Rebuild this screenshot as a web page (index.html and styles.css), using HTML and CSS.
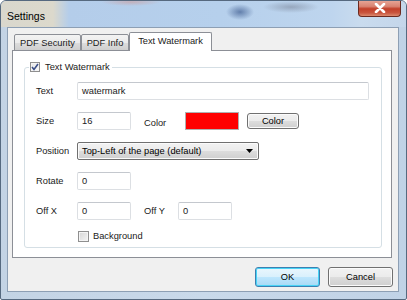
FILE: index.html
```html
<!DOCTYPE html>
<html>
<head>
<meta charset="utf-8">
<link rel="stylesheet" href="styles.css">
</head>
<body>
<div class="window">
  <div class="titlebar">
    <span class="title">Settings</span>
    <div class="close"><svg width="12" height="10" viewBox="0 0 12 10"><path d="M2 1 L10 9 M10 1 L2 9" stroke="#fff" stroke-width="2.6" stroke-linecap="round"/></svg></div>
  </div>
  <div class="client">
    <div class="tabs">
      <div class="tab t1">PDF Security</div>
      <div class="tab t2">PDF Info</div>
      <div class="tab active t3">Text Watermark</div>
    </div>
    <div class="panel">
      <div class="group">
        <div class="legend">
          <span class="check checked"><svg width="8" height="8" viewBox="0 0 8 8"><path d="M1 4 L3 6.5 L7 1" fill="none" stroke="#3b4f88" stroke-width="1.6"/></svg></span>
          <span>Text Watermark</span>
        </div>
        <div class="row">
          <span class="label">Text</span>
          <div class="field wide">watermark</div>
        </div>
        <div class="row">
          <span class="label">Size</span>
          <div class="field small">16</div>
          <span class="label lbl2 color-lbl">Color</span>
          <div class="swatch"></div>
          <div class="btn colorbtn">Color</div>
        </div>
        <div class="row">
          <span class="label">Position</span>
          <div class="select"><span>Top-Left of the page (default)</span><svg width="7" height="4" viewBox="0 0 7 4"><path d="M0 0 H7 L3.5 4 Z" fill="#000"/></svg></div>
        </div>
        <div class="row">
          <span class="label">Rotate</span>
          <div class="field small">0</div>
        </div>
        <div class="row">
          <span class="label">Off X</span>
          <div class="field small">0</div>
          <span class="label lbl2 offy">Off Y</span>
          <div class="field small">0</div>
        </div>
        <div class="row checkrow">
          <span class="check"></span>
          <span class="checklabel">Background</span>
        </div>
      </div>
    </div>
    <div class="buttons">
      <div class="btn ok">OK</div>
      <div class="btn cancel">Cancel</div>
    </div>
  </div>
</div>
</body>
</html>
```
FILE: styles.css
```css
html, body {
  margin: 0;
  padding: 0;
  background: #ffffff;
}
body {
  font-family: "Liberation Sans", Arial, sans-serif;
  font-size: 9.3px;
  color: #1a1a1a;
}
.window {
  width: 407px;
  height: 300px;
  box-sizing: border-box;
  border: 1px solid #56697f;
  border-radius: 6px 6px 2px 2px;
  background:
    linear-gradient(180deg, rgba(255,255,255,0) 0, rgba(255,255,255,0) 100%),
    linear-gradient(90deg, #c3d3e4 0, #c9d9ea 50%, #c0d2e6 100%);
  overflow: hidden;
}
.titlebar {
  height: 26px;
  display: flex;
  align-items: flex-start;
  background:
    radial-gradient(ellipse 14px 8px at 239px 11px, rgba(70,100,150,0.75), rgba(70,100,150,0)),
    radial-gradient(ellipse 28px 6px at 290px 6px, rgba(120,130,150,0.55), rgba(120,130,150,0)),
    radial-gradient(ellipse 30px 4px at 130px 1px, rgba(220,120,100,0.35), rgba(220,120,100,0)),
    linear-gradient(90deg, #d9d7cd 0, #dcd9cc 52px, #b4cdea 68px, #b6d0ec 220px, #bed5ee 330px, #c9dbee 360px, #c4d6ea 100%);
}
.title {
  font-size: 10.5px;
  color: #000;
  margin-left: 6px;
  margin-top: 9px;
  flex: 1;
}
.close {
  width: 43px;
  height: 17px;
  margin-top: -1px;
  margin-right: 5px;
  box-sizing: border-box;
  border: 1px solid #6b2a20;
  border-top: none;
  border-radius: 0 0 4px 4px;
  background: linear-gradient(180deg, #e9a99a 0, #d98372 40%, #c2402a 55%, #c9553e 80%, #dc8a6f 100%);
  display: flex;
  align-items: center;
  justify-content: center;
}
.client {
  margin-left: 6px;
  width: 392px;
  height: 265px;
  box-sizing: border-box;
  border: 1px solid #8d9fb4;
  background: #f0f0f0;
  padding: 4px 5px 0 4px;
}
.tabs {
  display: flex;
  align-items: flex-end;
  height: 19px;
  padding-left: 2px;
  margin-bottom: -1px;
  position: relative;
  z-index: 1;
}
.tab {
  box-sizing: border-box;
  height: 17px;
  border: 1px solid #8c8f96;
  border-radius: 2px 2px 0 0;
  background: linear-gradient(180deg, #f3f3f3 0, #ebebeb 50%, #dddddd 51%, #cfcfcf 100%);
  display: flex;
  align-items: center;
  justify-content: center;
  padding-top: 1px;
}
.t1 { width: 67px; }
.t2 { width: 48px; margin-left: 0; }
.t3 { width: 83px; }
.tab.active {
  height: 19px;
  background: #ffffff;
  border-bottom: none;
  padding-top: 0;
  padding-bottom: 3px;
}
.panel {
  width: 380px;
  height: 208px;
  box-sizing: border-box;
  border: 1px solid #8c8f96;
  background: #ffffff;
  padding: 16px 0 0 11px;
}
.group {
  position: relative;
  width: 358px;
  height: 181px;
  box-sizing: border-box;
  border: 1px solid #d5dfe5;
  border-radius: 3px;
  padding: 14px 0 0 11px;
  display: flex;
  flex-direction: column;
  gap: 12px;
}
.legend {
  position: absolute;
  top: -7px;
  left: 4px;
  background: #fff;
  padding: 0 2px 0 1px;
  display: flex;
  align-items: center;
  gap: 5px;
  height: 12px;
}
.check {
  width: 10px;
  height: 10px;
  box-sizing: border-box;
  border: 1px solid #8f8f8f;
  background: linear-gradient(135deg, #d6d6d6 0, #f4f4f4 100%);
  box-shadow: inset 0 0 0 1px #f4f4f4;
  display: flex;
  align-items: center;
  justify-content: center;
}
.check.checked {
  background: linear-gradient(135deg, #e4e4e4 0, #fbfbfb 100%);
}
.row {
  display: flex;
  align-items: center;
  height: 18px;
}
.label {
  width: 41px;
  flex: none;
}
.lbl2 { margin-left: 13px; }
.color-lbl { padding-top: 3px; }
.offy { width: 34px; }
.field {
  box-sizing: border-box;
  height: 18px;
  border: 1px solid #dcdfe3;
  border-top-color: #c4c8ce;
  border-radius: 2px;
  background: #fff;
  padding-left: 4px;
  display: flex;
  align-items: center;
}
.wide { width: 292px; }
.small { width: 54px; }
.swatch {
  width: 54px;
  height: 18px;
  box-sizing: border-box;
  border: 1px solid #b0b0b0;
  background: #ff0000;
}
.btn {
  box-sizing: border-box;
  border: 1px solid #707070;
  border-radius: 3px;
  background: linear-gradient(180deg, #f2f2f2 0, #ebebeb 50%, #dddddd 51%, #cfcfcf 100%);
  box-shadow: inset 0 0 0 1px #fbfbfb;
  display: flex;
  align-items: center;
  justify-content: center;
  color: #000;
}
.colorbtn {
  width: 52px;
  height: 16px;
  margin-left: 8px;
}
.select {
  box-sizing: border-box;
  width: 182px;
  height: 18px;
  border: 1px solid #707070;
  border-radius: 2px;
  background: linear-gradient(180deg, #f2f2f2 0, #ebebeb 50%, #dddddd 51%, #cfcfcf 100%);
  box-shadow: inset 0 0 0 1px #fbfbfb;
  display: flex;
  align-items: center;
  justify-content: space-between;
  padding: 0 5px 0 4px;
  color: #000;
}
.checkrow {
  align-items: flex-start;
  padding-left: 42px;
  gap: 4px;
}
.checkrow .check { width: 11px; height: 11px; margin-top: -1px; }
.checklabel { margin-top: -1px; }
.buttons {
  display: flex;
  justify-content: flex-end;
  gap: 8px;
  margin-top: 9px;
}
.ok, .cancel {
  width: 65px;
  height: 20px;
}
.ok {
  border-color: #3c7fb1;
  background: linear-gradient(180deg, #eaf6fd 0, #d9f0fc 50%, #bee6fd 51%, #a7d9f5 100%);
  box-shadow: inset 0 0 0 1px #48d4f6;
}
```
